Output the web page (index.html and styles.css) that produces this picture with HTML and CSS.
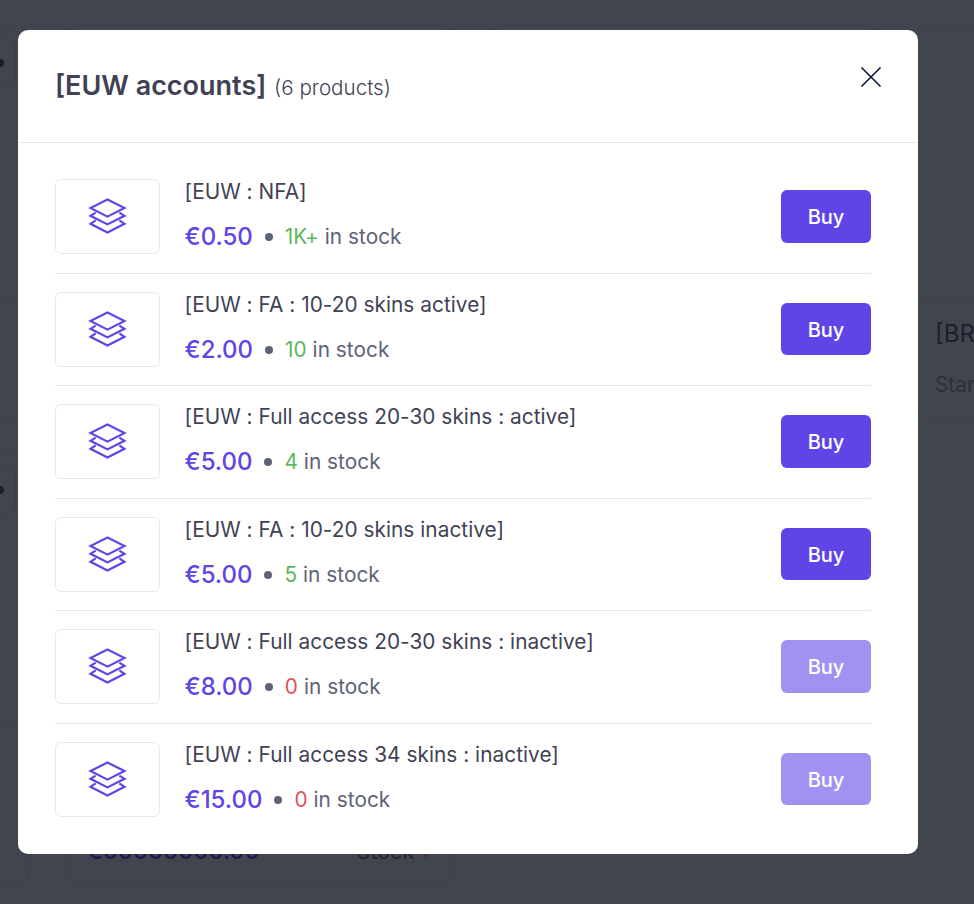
FILE: index.html
```html
<!DOCTYPE html>
<html lang="en">
<head>
<meta charset="utf-8">
<title>EUW accounts</title>
<link rel="stylesheet" href="styles.css">
</head>
<body>
<main class="page">
  <div class="card card-edge-l">
    <div class="card-body"><span class="card-action"><i class="card-icon"></i></span></div>
    <div class="card-foot"></div>
  </div>
  <div class="card">
    <div class="card-body"></div>
    <div class="card-foot"></div>
  </div>
  <div class="card">
    <div class="card-body"></div>
    <div class="card-foot"></div>
  </div>
  <div class="card card-edge-r">
    <div class="card-body"></div>
    <div class="card-foot">
      <div class="card-title">[BR</div>
      <div class="card-sub">Star</div>
    </div>
  </div>
  <div class="card card-tall card-edge-l">
    <div class="card-body"><span class="card-action"><i class="card-icon"></i></span></div>
    <div class="card-foot"></div>
  </div>
  <div class="card card-tall">
    <div class="card-body"></div>
    <div class="card-foot card-foot-end">
      <span class="card-price">€00000000.00</span>
      <span class="card-stock">Stock <b>1</b></span>
    </div>
  </div>
</main>

<div class="modal" role="dialog" aria-label="EUW accounts">
  <header class="modal-head">
    <h2 class="modal-title">[EUW accounts] <small>(6 products)</small></h2>
    <button class="close" aria-label="Close">
      <svg viewBox="0 0 22 22" width="22" height="22"><path d="M1.500 1.500 20.500 20.500M20.500 1.500 1.500 20.500"/></svg>
    </button>
  </header>
  <div class="modal-body">
    <article class="item">
      <div class="thumb"><svg class="stack" viewBox="0 0 36 36"><path d="M18 1 35.500 9.800 18 18.600 .5 9.800Z M5.800 14.500 .5 17.800 18 26.600 35.500 17.800 30.200 14.500 M5.800 22.500 .5 26 18 35 35.500 26 30.200 22.500"/></svg></div>
      <div class="info">
        <div class="name">[EUW : NFA]</div>
        <div class="meta"><span class="price">€0.50</span><span class="dot"></span><span class="stock"><span class="ok">1K+</span> in stock</span></div>
      </div>
      <button class="buy">Buy</button>
    </article>
    <article class="item">
      <div class="thumb"><svg class="stack" viewBox="0 0 36 36"><path d="M18 1 35.500 9.800 18 18.600 .5 9.800Z M5.800 14.500 .5 17.800 18 26.600 35.500 17.800 30.200 14.500 M5.800 22.500 .5 26 18 35 35.500 26 30.200 22.500"/></svg></div>
      <div class="info">
        <div class="name">[EUW : FA : 10-20 skins active]</div>
        <div class="meta"><span class="price">€2.00</span><span class="dot"></span><span class="stock"><span class="ok">10</span> in stock</span></div>
      </div>
      <button class="buy">Buy</button>
    </article>
    <article class="item">
      <div class="thumb"><svg class="stack" viewBox="0 0 36 36"><path d="M18 1 35.500 9.800 18 18.600 .5 9.800Z M5.800 14.500 .5 17.800 18 26.600 35.500 17.800 30.200 14.500 M5.800 22.500 .5 26 18 35 35.500 26 30.200 22.500"/></svg></div>
      <div class="info">
        <div class="name">[EUW : Full access 20-30 skins : active]</div>
        <div class="meta"><span class="price">€5.00</span><span class="dot"></span><span class="stock"><span class="ok">4</span> in stock</span></div>
      </div>
      <button class="buy">Buy</button>
    </article>
    <article class="item">
      <div class="thumb"><svg class="stack" viewBox="0 0 36 36"><path d="M18 1 35.500 9.800 18 18.600 .5 9.800Z M5.800 14.500 .5 17.800 18 26.600 35.500 17.800 30.200 14.500 M5.800 22.500 .5 26 18 35 35.500 26 30.200 22.500"/></svg></div>
      <div class="info">
        <div class="name">[EUW : FA : 10-20 skins inactive]</div>
        <div class="meta"><span class="price">€5.00</span><span class="dot"></span><span class="stock"><span class="ok">5</span> in stock</span></div>
      </div>
      <button class="buy">Buy</button>
    </article>
    <article class="item">
      <div class="thumb"><svg class="stack" viewBox="0 0 36 36"><path d="M18 1 35.500 9.800 18 18.600 .5 9.800Z M5.800 14.500 .5 17.800 18 26.600 35.500 17.800 30.200 14.500 M5.800 22.500 .5 26 18 35 35.500 26 30.200 22.500"/></svg></div>
      <div class="info">
        <div class="name">[EUW : Full access 20-30 skins : inactive]</div>
        <div class="meta"><span class="price">€8.00</span><span class="dot"></span><span class="stock"><span class="no">0</span> in stock</span></div>
      </div>
      <button class="buy buy-off">Buy</button>
    </article>
    <article class="item">
      <div class="thumb"><svg class="stack" viewBox="0 0 36 36"><path d="M18 1 35.500 9.800 18 18.600 .5 9.800Z M5.800 14.500 .5 17.800 18 26.600 35.500 17.800 30.200 14.500 M5.800 22.500 .5 26 18 35 35.500 26 30.200 22.500"/></svg></div>
      <div class="info">
        <div class="name">[EUW : Full access 34 skins : inactive]</div>
        <div class="meta"><span class="price">€15.00</span><span class="dot"></span><span class="stock"><span class="no">0</span> in stock</span></div>
      </div>
      <button class="buy buy-off">Buy</button>
    </article>
  </div>
</div>
</body>
</html>
```

FILE: styles.css
```css
* { box-sizing: border-box; }
html, body { margin: 0; height: 100%; }
body {
  background: #41454e;
  font-family: Inter, "Liberation Sans", sans-serif;
  overflow: hidden;
}

.page {
  width: 974px;
  height: 904px;
  overflow: hidden;
  padding-top: 25px;
  display: grid;
  grid-template-columns: 30px 388px 388px 1fr;
  grid-template-rows: 392px 429px;
  gap: 37px 36px;
  align-items: start;
}
.card {
  height: 392px;
  min-width: 0;
  overflow: hidden;
  border: 1px solid #3d4048;
  border-radius: 12px;
  display: flex;
  flex-direction: column;
}
.card-edge-l { border-left: 0; border-top-left-radius: 0; border-bottom-left-radius: 0; }
.card-edge-r { border-right: 0; border-top-right-radius: 0; border-bottom-right-radius: 0; }
.card-tall { height: 429px; }
.card-body {
  height: 270px;
  flex: none;
  padding: 13px 13px 0 0;
  display: flex;
  justify-content: flex-end;
  align-items: flex-start;
}
.card-tall .card-body { padding-top: 11px; }
.card-foot {
  flex: 1;
  border-top: 1px solid #3d4048;
  padding: 23px 0 0 20px;
  white-space: nowrap;
}
.card-action {
  width: 16px;
  height: 48px;
  flex: none;
  border: 1px solid #3d4048;
  border-left: 0;
  border-radius: 0 8px 8px 0;
  display: flex;
  align-items: center;
}
.card-icon {
  width: 4px;
  height: 8px;
  border-radius: 0 4px 4px 0;
  background: #1b1e2b;
}
.card-title { color: #1b1e2b; font-size: 24px; line-height: 28px; }
.card-sub { color: #2d303b; font-size: 20.800px; line-height: 26px; margin-top: 24px; }
.card-foot-end {
  display: flex;
  justify-content: space-between;
  align-items: flex-end;
  padding: 0 24px 17px 20px;
}
.card-price { color: #1c1a4d; font-size: 23.400px; font-weight: 500; line-height: 28px; }
.card-stock { color: #24262f; font-size: 21.500px; line-height: 28px; }
.card-stock b { color: #5a2430; font-weight: 400; }

.modal {
  position: fixed;
  left: 18px;
  top: 30px;
  width: 900px;
  height: 824px;
  background: #fff;
  border-radius: 10px;
}
.modal-head {
  height: 113px;
  border-bottom: 1px solid #e9e9ec;
  padding: 0 37px;
  display: flex;
  justify-content: space-between;
}
.modal-title {
  margin: 39px 0 0;
  color: #3f4254;
  font-size: 27px;
  line-height: 34px;
  font-weight: 600;
}
.modal-title small {
  font-size: 20.600px;
  font-weight: 300;
  margin-left: 1px;
}
.close {
  border: 0;
  background: none;
  padding: 0;
  margin: 36px -1px 0 0;
  width: 22px;
  height: 22px;
}
.close svg { display: block; }
.close path { fill: none; stroke: #071437; stroke-width: 1.600; }

.modal-body { padding: 18px 47px 0 37px; }
.item {
  height: 112.500px;
  padding-top: 18px;
  display: flex;
  align-items: flex-start;
  border-bottom: 1px solid #e9e9ec;
}
.item:last-child { border-bottom: 0; }
.thumb {
  width: 105px;
  height: 75px;
  border: 1px solid #e9e9ec;
  border-radius: 6px;
  padding-bottom: 1px;
  display: flex;
  align-items: center;
  justify-content: center;
  flex: none;
}
.stack { width: 35px; height: 36px; overflow: visible; fill: none; stroke: #5f45e8; stroke-width: 2.200; }
.info { flex: 1; margin-left: 24.500px; margin-top: -1px; }
.name { color: #3f4254; font-size: 20.800px; font-weight: 400; letter-spacing: .04px; line-height: 28px; }
.meta { display: flex; align-items: center; margin-top: 17px; line-height: 28px; }
.price { color: #5f45e8; font-size: 24px; font-weight: 500; }
.dot { width: 8px; height: 8px; border-radius: 50%; background: #5e6278; margin: 0 12px; }
.stock { color: #5e6278; font-size: 20.800px; font-weight: 400; letter-spacing: .03px; }
.ok { color: #5cb85c; }
.no { color: #e05260; }
.buy {
  width: 90px;
  height: 52.500px;
  margin-top: 11px;
  padding: 2px 0 0;
  border: 0;
  border-radius: 6px;
  background: #5f45e8;
  color: #fff;
  font: 550 20px Inter, "Liberation Sans", sans-serif;
  flex: none;
}
.buy-off { background: #a391f2; }
```
